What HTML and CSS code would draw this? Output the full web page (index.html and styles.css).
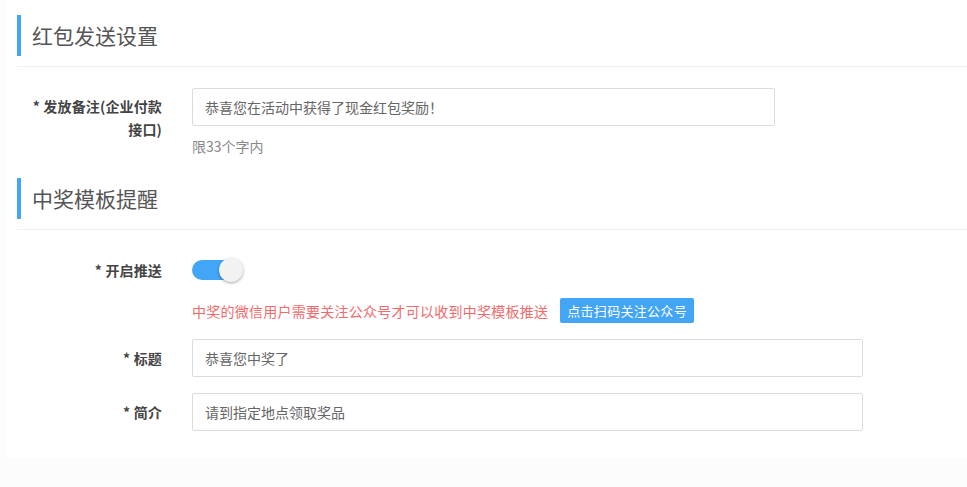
FILE: index.html
```html
<!DOCTYPE html>
<html lang="zh-CN">
<head>
<meta charset="utf-8">
<title>设置</title>
<link rel="stylesheet" href="styles.css">
</head>
<body>
<div class="page">
  <section class="section">
    <div class="sec-head"><h2 class="sec-title">红包发送设置</h2></div>
    <div class="form">
      <div class="row">
        <label class="label label-multi">* 发放备注(企业付款<br>接口)</label>
        <div class="field">
          <div class="input input-w1">恭喜您在活动中获得了现金红包奖励！</div>
          <div class="hint">限33个字内</div>
        </div>
      </div>
    </div>
  </section>
  <section class="section section-2">
    <div class="sec-head"><h2 class="sec-title">中奖模板提醒</h2></div>
    <div class="form">
      <div class="row row-toggle">
        <label class="label">* 开启推送</label>
        <div class="field field-toggle">
          <span class="switch"><span class="track"></span><span class="knob"></span></span>
        </div>
      </div>
      <div class="row row-tip">
        <div class="label"></div>
        <div class="field tip-line">
          <span class="tip">中奖的微信用户需要关注公众号才可以收到中奖模板推送</span>
          <button class="btn">点击扫码关注公众号</button>
        </div>
      </div>
      <div class="row row-input">
        <label class="label">* 标题</label>
        <div class="field"><div class="input input-w2">恭喜您中奖了</div></div>
      </div>
      <div class="row row-input">
        <label class="label">* 简介</label>
        <div class="field"><div class="input input-w2">请到指定地点领取奖品</div></div>
      </div>
    </div>
  </section>
</div>
</body>
</html>
```

FILE: styles.css
```css
* { box-sizing: border-box; }
html, body { margin: 0; padding: 0; background: #fcfcfc; }
body {
  font-family: "Noto Sans CJK SC", "Noto Sans", "Liberation Sans", sans-serif;
  color: #333;
  width: 967px;
  height: 487px;
  overflow: hidden;
}
.page {
  margin-left: 7px;
  height: 458px;
  background: #fff;
  padding: 15px 0 0 10px;
}
.sec-head {
  padding-bottom: 10px;
  border-bottom: 1px solid #f0f0f0;
}
.sec-title {
  margin: 0;
  height: 41px;
  border-left: 4px solid #42a5f5;
  padding-left: 11px;
  display: flex;
  align-items: center;
  font-size: 21px;
  font-weight: 400;
  color: #555;
  line-height: 1;
}
.form { padding-top: 21px; }
.row {
  display: grid;
  grid-template-columns: 145px 1fr;
  column-gap: 30px;
}
.label {
  text-align: right;
  font-size: 14px;
  font-weight: 600;
  color: #444;
  line-height: 38px;
  letter-spacing: 0.15px;
}
.label-multi { line-height: 23px; padding-top: 7px; }
.input {
  height: 38px;
  border: 1px solid #dcdcdc;
  border-radius: 2px;
  padding: 0 12px;
  font-size: 14px;
  line-height: 36px;
  color: #666;
}
.input-w1 { width: 583px; }
.input-w2 { width: 671px; }
.hint {
  margin-top: 10px;
  font-size: 14px;
  line-height: 20px;
  color: #888;
}
.section-2 { margin-top: 22px; }
.field-toggle { display: flex; align-items: center; height: 38px; }
.switch {
  position: relative;
  display: inline-block;
  width: 51px;
  height: 24px;
}
.track {
  position: absolute;
  left: 0;
  top: 2px;
  width: 46px;
  height: 20px;
  border-radius: 10px;
  background: #42a5f5;
}
.knob {
  position: absolute;
  left: 27px;
  top: 0;
  width: 24px;
  height: 24px;
  border-radius: 50%;
  background: #f2f2f2;
  box-shadow: 0 1px 3px rgba(0,0,0,0.35);
}
.row-tip { margin-top: 9px; }
.tip-line { display: flex; align-items: center; height: 25px; }
.tip {
  font-size: 14px;
  color: #f16b6b;
  letter-spacing: 0.25px;
}
.btn {
  margin-left: 12px;
  height: 25px;
  padding: 0 7px;
  border: none;
  border-radius: 2px;
  background: #42a5f5;
  color: #fff;
  font-family: inherit;
  font-size: 13px;
  letter-spacing: 0.3px;
  line-height: 25px;
}
.row-tip + .row-input { margin-top: 16px; }
.row-input + .row-input { margin-top: 16px; }
```
